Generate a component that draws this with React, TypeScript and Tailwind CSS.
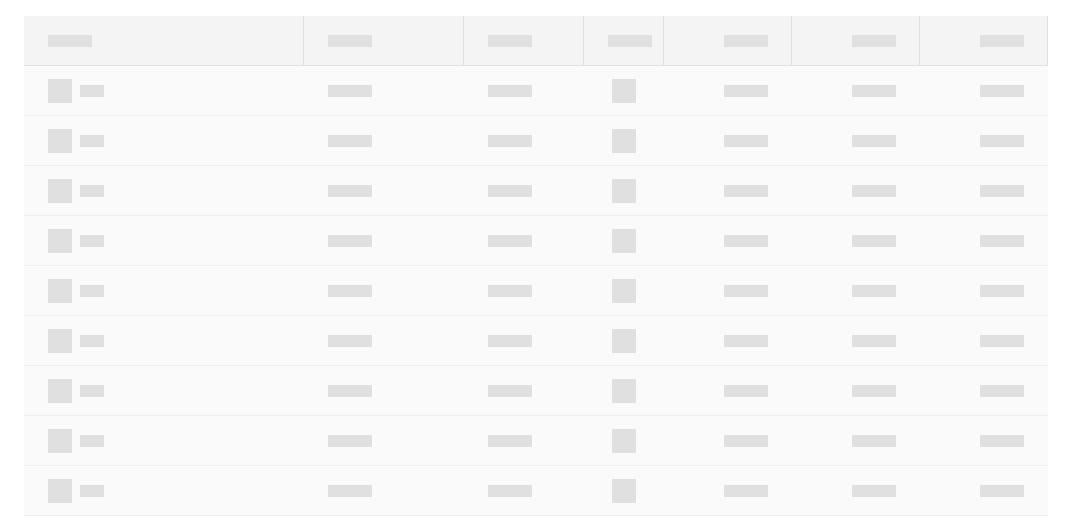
import React from "react";

const columns = [
  { key: "name", align: "left" },
  { key: "type", align: "left" },
  { key: "status", align: "left" },
  { key: "icon", align: "left" },
  { key: "a", align: "right" },
  { key: "b", align: "right" },
  { key: "c", align: "right" },
];

const rows = Array.from({ length: 9 }, (_, i) => i);

const Bar = ({ w = "w-11" }: { w?: string }) => (
  <div className={`${w} h-3 shrink-0 bg-[#e0e0e0]`} />
);

const Block = () => <div className="size-6 shrink-0 bg-[#e0e0e0]" />;

// header cells carry the 1px divider, so right padding is 23px there
const headerCell = (align: string) =>
  align === "right"
    ? "flex h-[50px] items-center justify-end border-b border-r border-[#e0e0e0] bg-[#f4f4f4] pl-6 pr-[23px]"
    : "flex h-[50px] items-center justify-start border-b border-r border-[#e0e0e0] bg-[#f4f4f4] pl-6";

const bodyCell = (align: string) => {
  if (align === "right")
    return "flex h-[50px] items-center justify-end border-b border-[#eeeeee] bg-[#fafafa] px-6";
  if (align === "center")
    return "flex h-[50px] items-center justify-center border-b border-[#eeeeee] bg-[#fafafa]";
  return "flex h-[50px] items-center justify-start border-b border-[#eeeeee] bg-[#fafafa] px-6";
};

const App = () => {
  return (
    <div className="min-h-screen bg-white px-6 pt-4 font-['Liberation_Sans',sans-serif]">
      <div className="grid w-[1024px] grid-cols-[280px_160px_120px_80px_128px_128px_128px]">
        {columns.map((col) => (
          <div key={col.key} className={headerCell(col.align)}>
            <Bar />
          </div>
        ))}

        {rows.map((r) => (
          <React.Fragment key={r}>
            <div className={bodyCell("left")}>
              <div className="flex items-center gap-2">
                <Block />
                <Bar w="w-6" />
              </div>
            </div>
            <div className={bodyCell("left")}>
              <Bar />
            </div>
            <div className={bodyCell("left")}>
              <Bar />
            </div>
            <div className={bodyCell("center")}>
              <Block />
            </div>
            <div className={bodyCell("right")}>
              <Bar />
            </div>
            <div className={bodyCell("right")}>
              <Bar />
            </div>
            <div className={bodyCell("right")}>
              <Bar />
            </div>
          </React.Fragment>
        ))}
      </div>
    </div>
  );
};

export default App;
